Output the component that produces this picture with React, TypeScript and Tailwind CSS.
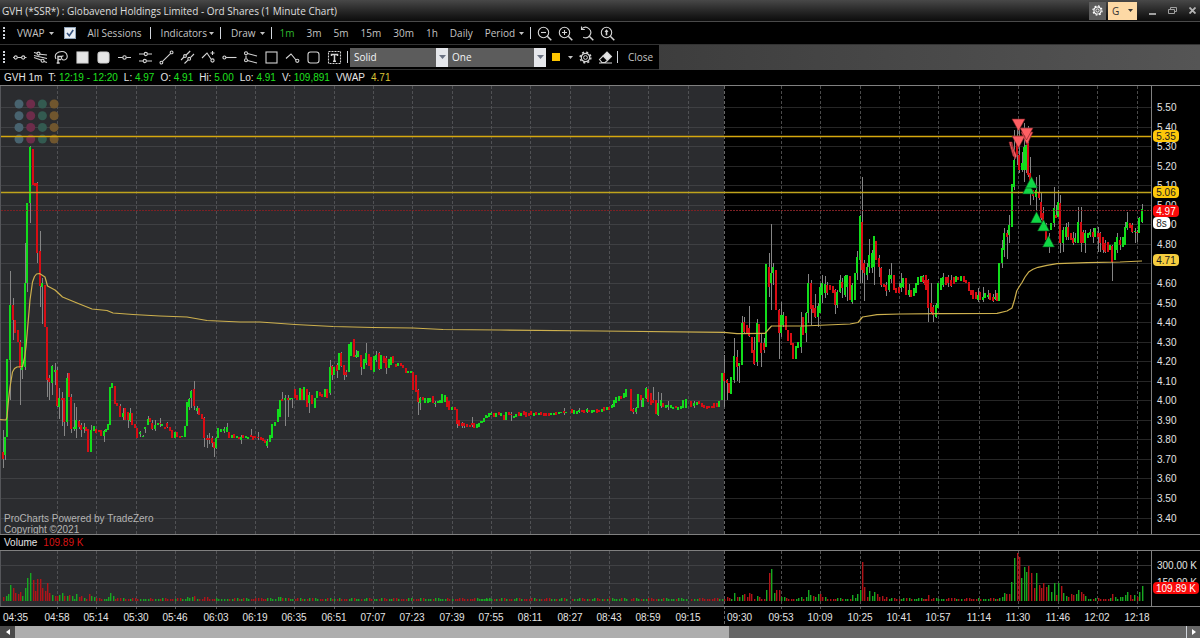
import type { ReactNode } from "react";

type Bar = {
  x: number;
  top: number;
  bottom: number;
  high: number;
  low: number;
  up: boolean;
};

// Bars are stored in thirds of a pixel from the origin of their segment:
// colour + x, body top, body bottom, and the wick when it is longer than the body.
const SEGMENTS = [
  {
    x: 0,
    y: 140,
    bars: `r10 937 957 870 983;g16 890 945 890 960;g22 658 890;g30 495 660 392 780;r38 495 540 475 600;r45 540 578;r53 570 605;r60 605 685 600 795;g67 620 690 620 718;g75 430 680 310 690;g82 190 430 190 455;g90 20 190 18 248;r98 28 135;r105 130 137;r111 130 340 127 370;r119 332 438 272 500;g127 430 440 415 553;r134 435 562;r140 562 720 560 770;r148 715 725 705 780;g155 678 728 675 765;g164 690 695 670 735;r171 690 798 680 800;g177 775 800 745 838;r185 775 780 757 857;r193 775 847 775 887;g201 715 845 700 857;r207 700 770;r214 770 868 762 878;g221 862 868 790 872;g229 840 868 800 893;r237 842 860 840 868;r244 855 870 850 892;g251 862 868 850 880;r259 862 872;r265 868 935;g273 870 937 855 937;g281 857 872;r289 868 878;r296 870 877;r303 870 887;g311 872 887 870 905;g318 867 875;g325 852 870;g331 742 855;g337 730 745;r345 738 793;r352 790 797;r360 797 830 793 832;g368 820 832 803 840;r375 803 840;r384 815 840 815 865;g391 820 842 803 845;r397 820 855;r405 853 865;r412 863 893;g420 875 882 873 890;g428 887 890 885 892;g436 862 866 860 880;g443 838 855 828 855;r450 835 845;r457 850 868 840 870;g465 855 868 840 872;g473 850 855;r480 848 853 833 860;g487 852 858;r495 860 866;r502 848 860 845 865;r510 860 872;r517 870 893;g525 877 893;r532 877 892;r540 887 893;g547 887 892;g554 857 890;g561 785 857;g567 778 800 775 810;g574 752 775 750 805;r583 748 797 722 810;g590 805 812 797 822;r597 803 825;r605 822 838;r612 835 895 832 920;r620 893 900 885 925;r628 895 900 880 913;r635 893 910 887 920;r641 907 925 905 952;g648 895 925 890 928;g655 865 895;g663 868 877;g671 868 872 862 878;g680 862 875 850 875;r687 875 895;g695 885 895;r702 882 895;g710 888 895;r717 890 897`,
  },
  {
    x: 240,
    y: 320,
    bars: `g3 350 360 345 372;r10 345 355;g17 348 355;g25 350 358;r32 345 352 328 352;r40 348 360;r46 348 355;r54 350 355 335 360;r62 352 360;r69 355 362;r76 360 370;g82 362 378 358 383;g90 345 365;g97 313 353;g105 305 318;g113 268 305;g119 240 290;r127 236 242 215 242;g136 235 240 225 318;r143 235 240 225 290;g150 233 240;g157 235 238 235 265;r165 208 235;r172 225 240;g180 205 240;r187 208 240;g193 200 240;r200 208 260;g208 225 250 215 280;r216 225 253;g224 235 265;g232 213 235;r240 215 228;r247 222 232;g255 207 232;r262 208 235;g269 140 220 120 225;r275 138 165 135 180;g283 140 165;r290 135 152 130 175;g297 98 150;r304 98 137 95 140;r312 135 165 135 180;r319 155 165 150 172;g327 72 155;g333 65 108;r342 57 110;g348 105 112 90 115;g355 92 112;r363 105 142 105 165;g371 118 148;g379 100 130 68 135;r387 103 138;r394 110 150;g401 108 155;g408 105 120 93 125;r416 98 148 95 150;g424 105 148;r431 107 130;r438 115 145 108 162;g446 118 145;g453 110 135;r460 108 130;r468 132 140;g475 130 138;r483 128 138;r490 135 145;r497 143 158;g505 152 160;g512 152 158;r520 155 210;r527 165 215;r534 210 245 208 285;g541 235 250 232 270;r549 232 240;g556 235 248;g563 235 248;g571 235 245;r578 228 250;g585 248 252 242 262;g593 243 250;g600 240 248;g607 222 248;g614 225 245;r621 230 262;r628 243 270;g636 262 270;r644 262 270;r651 268 312 268 325;r658 300 318;r666 310 318 305 325;r673 308 318 308 325;r681 312 322;r689 315 322;r696 308 315 292 322;r703 310 325;g711 312 325;g718 308 320;g725 303 308;g733 293 305;g740 287 295;g748 280 290`,
  },
  {
    x: 480,
    y: 360,
    bars: `g3 183 190;g11 175 185;g19 165 175;g26 158 170;g33 160 164 155 165;r41 160 172;g48 158 170;r56 155 165;g64 160 168;r71 165 180;g78 155 180;r86 155 165;r94 162 166 155 182;g101 168 175;g108 162 170;r116 155 168;g123 160 168;r131 153 165;r138 155 170;r146 160 168;r153 153 165;g161 160 167;r168 155 165;g176 158 165;r183 155 165;r191 160 168;r198 158 168;r206 158 168;g213 158 165;g221 158 165;r228 155 165;g236 155 163;g243 155 160;r251 153 160 143 165;g258 155 160;r275 148 158;g283 150 163;g290 152 163;g298 150 156 143 160;r305 150 157;r313 150 158;g320 148 155 143 158;r328 150 157;g335 150 158;g343 150 157;r350 148 160;r358 150 157;g365 148 155;r372 140 152;g380 140 150;r388 140 150;g395 135 143 132 145;g402 120 142;g409 112 130;g417 108 122;r424 108 116;g432 98 113;g439 88 110;r452 88 152;r460 148 155 145 162;g467 145 155 140 163;g475 103 145;r482 105 120 105 140;g490 115 140;g497 85 115 80 118;r505 88 125;r512 100 135;r520 120 130 80 130;r527 120 162;g534 130 165 95 168;g542 120 138 100 145;r550 130 140;g557 135 145;g565 135 142 122 150;g572 135 143;g580 140 148;r587 138 145;g595 140 150;g602 138 148;g610 120 145;g617 118 143;r634 122 140;g642 130 138 122 145;g650 125 135;r658 122 132;r665 128 142;r673 135 143;r680 138 146;r688 137 145;r695 138 145;r703 128 145;r710 130 142;g717 123 140`,
  },
  {
    x: 720,
    y: 170,
    bars: `g5 608 690;r13 608 632 555 710;r21 630 640 628 690;r28 640 670;g34 620 672;g41 558 630 503 640;r50 560 590 540 632;g58 580 587 580 640;g65 458 585 438 585;r73 455 485 440 490;r80 465 493;r87 475 498 408 500;r95 500 548;r102 540 583 500 585;g110 460 575 448 587;r117 462 515;r124 520 550 490 590;r131 520 540 505 550;g138 283 530;r147 290 350 248 380;g152 310 340 162 420;g160 290 308 278 345;r168 300 420;r176 420 488 418 568;g184 435 490 395 500;g190 435 465 425 470;r197 437 480;r205 480 513;r213 490 525;r220 520 567;g228 528 568;g235 515 535;g242 470 530 425 548;r250 440 495;g257 430 490 425 515;g265 340 430 313 460;r272 338 418 330 465;r280 405 430;r286 415 442 373 445;g293 408 440 400 472;g301 352 428 340 430;g307 340 375 315 400;g314 342 370 318 385;r322 345 370 335 375;r330 345 360;r338 347 370;r345 360 405 358 432;g352 365 405 360 415;g360 330 365 315 370;r367 335 355 325 385;g375 318 375 315 380;g382 315 350 315 392;r390 318 390;g397 345 395 338 402;g404 310 390;g412 260 310 243 330;g419 138 270 135 340;r425 155 300 20 340;r433 280 310 270 392;g440 290 315 280 330;g447 255 290 208 310;g455 250 295 240 310;g462 198 290 198 345;r469 212 270;r477 265 290 255 320;r484 293 345 290 350;r492 342 350;r499 345 362 335 378;g506 315 360 298 365;g514 315 328 280 340;r521 315 360;r529 355 368;r537 352 368 340 370;g543 340 355 310 365;g550 325 350 325 355;r558 325 375;g566 360 375 343 380;r574 360 380;g581 355 378;g588 340 370;g595 320 345;g603 317 335;g610 317 330;r616 330 345`,
  },
  {
    x: 920,
    y: 90,
    bars: `r10 560 575 555 580;r17 555 600;r24 570 655 568 697;r32 640 665 580 670;r40 650 675 645 697;g47 645 680 640 685;g55 580 655;g62 565 600;g70 560 585 550 590;r78 562 585;r85 560 580 555 590;r93 570 588 555 590;r101 562 582;g108 558 575;r115 560 570;g124 558 572;r131 558 575;r138 570 580;r146 575 602;r153 600 615;r160 600 628;r167 605 628;g174 615 630 595 635;r181 605 630;g189 620 630 592 635;g196 610 625;g204 615 620 600 628;r211 608 630;r218 622 632 612 635;g226 620 628 600 630;r232 608 632;g238 518 632;g245 475 520 450 535;g252 428 480 415 500;r260 430 440 420 508;g267 405 435 375 460;g275 283 412;g283 210 290 120 300;r290 150 195 110 225;r297 195 240 100 250;g305 220 240 185 245;g313 170 240 100 275;g319 165 240 165 250;r325 160 255 108 260;r331 250 290 200 345;r338 300 318 300 330;g348 300 320 260 360;r357 305 325 255 330;r362 335 385 305 390;r370 370 415 350 420;r378 415 450 400 460;g386 440 450 430 490;g394 400 420;g401 355 400 290 410;r408 375 385 345 385;g415 335 380 300 380;r421 340 460 315 488;g429 420 460 410 485;g437 410 440 400 450;r444 410 440 395 450;r452 430 450;r459 445 460 425 465;g466 445 455 430 460;g474 395 460 350 460;r482 395 460 350 485;r489 425 460 420 460;g496 430 460 420 490;g503 430 445;g510 425 435 418 440;r518 425 440 415 460;g525 415 440;r533 430 440 410 485;r541 430 460 425 485;r548 440 480 440 490;r556 460 485 450 490;r563 455 485;g570 465 480;r577 468 515 465 572;g585 455 510;g592 440 480 430 490;r600 450 465 440 480;g608 440 470;g615 410 465 395 465;g622 395 415 367 420;r629 400 415;r636 405 425 398 430;g644 422 426 415 460;r651 425 430 420 455;g658 385 430 380 430;g665 358 395 343 400`,
  },
];

const BARS: Bar[] = SEGMENTS.flatMap((segment) =>
  segment.bars.split(";").map((item) => {
    const [x, top, bottom, high = top, low = bottom] = item
      .slice(1)
      .split(" ")
      .map(Number);
    const toY = (v: number) => Math.round(segment.y + v / 3);
    return {
      x: Math.round(segment.x + x / 3),
      top: toY(top),
      bottom: toY(bottom),
      high: toY(high),
      low: toY(low),
      up: item[0] === "g",
    };
  })
);

// colour + x, height
const VOLUME_SPIKES =
  "r3 4;g6 5;g8 7;g10 16;r13 13;r15 8;r18 7;r20 9;g22 5;g25 13;g27 23;g30 28;r33 21;r35 10;r37 22;r40 22;r42 13;r45 10;r47 18;r49 8;g52 6;r55 5;r57 5;g59 6;g62 8;r64 5;g67 5;r69 6;g72 5;g76 7;r79 4;r81 5;r89 7;g91 5;g94 4;g108 4;g110 8;g113 5;g187 4;g192 4;r194 5;r204 4;r207 4;g278 4;g280 4;r727 4;g734 8;r737 4;g739 4;g742 6;r744 7;r747 4;r749 8;r751 7;g757 5;r759 4;g766 11;r769 28;g771 32;g774 8;r776 11;r779 11;g781 4;g784 4;g801 4;g806 4;g808 11;g810 6;r813 5;g815 4;g818 7;r820 7;r822 4;g825 4;g852 6;g857 7;g860 11;r862 39;r864 14;r867 4;g869 10;g872 5;g874 9;r877 7;r879 4;r882 5;r886 4;r928 6;g999 3;g1002 4;g1004 8;r1006 7;r1009 7;g1011 19;g1014 43;r1017 48;r1019 44;g1021 23;g1024 34;g1026 29;r1028 35;r1031 28;r1034 13;g1036 28;r1039 16;r1041 13;r1043 18;r1046 14;g1048 16;g1051 9;g1054 18;r1056 6;g1058 18;r1061 15;g1063 8;g1066 5;r1068 4;r1071 7;r1073 6;g1076 7;g1078 11;r1081 9;r1083 7;g1085 5;r1112 7;g1115 4;g1120 4;g1122 4;g1125 6;g1127 9;r1130 6;g1134 6;r1137 4;g1139 9;g1142 15"
    .split(";")
    .map((item) => {
      const [x, height] = item.slice(1).split(" ").map(Number);
      return { x, height, up: item[0] === "g" };
    });

const VOLUME = [
  ...VOLUME_SPIKES,
  ...BARS.filter((b) => !VOLUME_SPIKES.some((s) => Math.abs(s.x - b.x) < 2)).map(
    (b) => ({ x: b.x, height: b.x % 3 === 0 ? 3 : 2, up: b.up })
  ),
];

const TIMES = [
  [57, "04:58"], [96, "05:14"], [136, "05:30"], [175, "05:46"], [216, "06:03"],
  [255, "06:19"], [294, "06:35"], [334, "06:51"], [373, "07:07"], [412, "07:23"],
  [452, "07:39"], [491, "07:55"], [530, "08:11"], [570, "08:27"], [609, "08:43"],
  [648, "08:59"], [688, "09:15"], [781, "09:53"], [820, "10:09"], [860, "10:25"],
  [899, "10:41"], [938, "10:57"], [979, "11:14"], [1018, "11:30"], [1058, "11:46"],
  [1097, "12:02"], [1137, "12:18"],
] as const;

const PRICES = Array.from({ length: 22 }, (_, i) => ({
  y: Math.round(107 + i * 19.55),
  label: (5.5 - i * 0.1).toFixed(2),
}));

const VWAP =
  "M0 419.7L6 420L7 417L8.500 400L10 387L12.5 372L14.500 368.500L17 367L22.5 366.5L24.500 358L26 347L30 300L32.5 282L34.500 276.500L36.5 274L39.5 273.5L45 277L47.5 286L55 290L62.5 297L77 303L92 309L107 310.5L113 313L133 314.5L160 316L187 317L207 320.5L240 322L260 322L295 324.5L333 326.5L373 327.5L413 328L443 329.5L500 330L600 331L724 332.3L737 333.7L765 333.3L771.5 326L803 326L850 324L858 322.5L862.5 317L877 314.7L900 314L940 313.7L997 313.3L1007 311L1012 308L1014.5 300L1016.700 291L1019 287L1022 282.500L1025 277L1029 271.7L1033 269.300L1038 267.3L1047 265.300L1057 263.7L1087 262.7L1120 262L1142 261";

const SELLS = [[1018, 119], [1026, 128], [1018, 136]];
const BUYS = [[1028, 183], [1031, 177], [1036, 212], [1043, 220], [1048, 236]];
const DOTS = ["#48636f", "#6d2c4a", "#335a50", "#70562e"];

const Grip = () => (
  <span className="h-3 border-l-2 border-dotted border-gray-300" />
);

const Divider = () => <span className="h-3 w-px shrink-0 bg-gray-300" />;

const Caret = () => (
  <svg width="5" height="3" viewBox="0 0 5 3" fill="currentColor">
    <path d="M0 0h5L2.5 3z" />
  </svg>
);

const Icon = ({ children }: { children: ReactNode }) => (
  <svg
    width="15"
    height="15"
    viewBox="0 0 15 15"
    fill="none"
    stroke="#d4d4d4"
    strokeWidth="1.1"
  >
    {children}
  </svg>
);

const Magnifier = ({ children }: { children?: ReactNode }) => (
  <Icon>
    <circle cx="6.5" cy="6.5" r="5.2" />
    <path d="M10.3 10.3l4 4" strokeWidth="1.5" />
    {children}
  </Icon>
);

const Gear = ({ color, size }: { color: string; size: number }) => (
  <svg width={size} height={size} viewBox="0 0 13 13" fill="none" stroke={color}>
    <circle cx="6.5" cy="6.5" r="4.2" strokeWidth="1.2" />
    <circle cx="6.5" cy="6.5" r="5.4" strokeWidth="1.4" strokeDasharray="2.1 2.14" />
    <circle cx="6.5" cy="6.5" r="1.9" />
  </svg>
);

const TOOLS: { name: string; icon: ReactNode }[] = [
  {
    name: "Line",
    icon: (
      <>
        <path d="M1 7.5h1M5.5 7.5h4M13 7.5h1.5" />
        <circle cx="3.7" cy="7.5" r="1.6" />
        <circle cx="11.2" cy="7.5" r="1.6" />
      </>
    ),
  },
  {
    name: "Channel",
    icon: (
      <>
        <path d="M1 2.500l3 .7M7 4.200l7 .8M1 7.500l7 2.500M11 11.500l3 1M1 5.500l13 3" />
        <circle cx="5.5" cy="3.6" r="1.5" />
        <circle cx="9.6" cy="10.8" r="1.5" />
      </>
    ),
  },
  {
    name: "Fibonacci",
    icon: (
      <>
        <path d="M2 9C-.5 4 4 1.500 8 1.500c6 0 7 8 2 8.500-3 .3-3.500-4-.5-4.300" />
        <path d="M4 13V6.500h4M4 9.500h3M2.700 13h3" strokeWidth="1.4" />
      </>
    ),
  },
  { name: "Filled rectangle", icon: <rect x="2" y="2" width="11" height="11" fill="#e5e5e5" /> },
  { name: "Filled ellipse", icon: <rect x="2" y="2" width="11" height="11" rx="2.5" fill="#e5e5e5" /> },
  {
    name: "Horizontal line",
    icon: (
      <>
        <path d="M1 7.500h4.700M9.300 7.500H14" />
        <circle cx="7.5" cy="7.5" r="1.7" />
      </>
    ),
  },
  {
    name: "Parallel lines",
    icon: (
      <>
        <path d="M1 4h5M9.500 4H14M1 11h4M8.500 11H14" />
        <circle cx="7.8" cy="4" r="1.6" />
        <circle cx="6.8" cy="11" r="1.6" />
      </>
    ),
  },
  {
    name: "Trend line",
    icon: (
      <>
        <path d="M3.300 11.700l8.400-8.400" />
        <circle cx="2.4" cy="12.6" r="1.4" />
        <circle cx="12.6" cy="2.400" r="1.4" />
      </>
    ),
  },
  {
    name: "Trend channel",
    icon: (
      <>
        <path d="M1 10l3-3M6.200 5l4-4M4.500 13.500l3.700-3.700M10.400 7.600L14 4" />
        <circle cx="5" cy="6" r="1.4" />
        <circle cx="9.2" cy="8.800" r="1.4" />
      </>
    ),
  },
  {
    name: "Wave",
    icon: (
      <>
        <path d="M1 8l5-5 4 6M11.500 1v4M9.500 3h4" />
        <circle cx="11.5" cy="10.500" r="1.6" />
      </>
    ),
  },
  {
    name: "Ray",
    icon: (
      <>
        <path d="M4 7.500h10.500" />
        <circle cx="2.4" cy="7.5" r="1.5" />
      </>
    ),
  },
  {
    name: "Rays",
    icon: (
      <>
        <path d="M4.500 3.500L14 6M4.500 10.500L14 13M3 5.500v3" />
        <circle cx="3" cy="3.300" r="1.5" />
        <circle cx="3" cy="10.200" r="1.5" />
      </>
    ),
  },
  { name: "Rectangle", icon: <rect x="2" y="2" width="11" height="11" /> },
  {
    name: "Polyline",
    icon: (
      <>
        <path d="M1 8.500l5-4.500 5 6" />
        <circle cx="12.300" cy="10.800" r="1.6" />
      </>
    ),
  },
  { name: "Rounded rectangle", icon: <rect x="2" y="2" width="11" height="11" rx="2.5" /> },
  {
    name: "Text",
    icon: (
      <>
        <rect x="1.500" y="1.500" width="12" height="12" strokeDasharray="2 1" />
        <path d="M4.500 6V4.500h6V6M7.500 4.500v7M6 11.200h3" strokeWidth="1.5" />
      </>
    ),
  },
];

const Quote = ({ label, value }: { label: string; value: string }) => (
  <span>
    {label} <span className="text-[#1fe01f]">{value}</span>
  </span>
);

const Badge = ({
  y,
  label,
  width = 26,
  fill,
  color = "#1a1a1a",
}: {
  y: number;
  label: string;
  width?: number;
  fill: string;
  color?: string;
}) => (
  <g>
    <rect x="1153" y={y - 6} width={width} height="12" rx="4" fill={fill} />
    <text x={1153 + width / 2} y={y + 4} textAnchor="middle" fill={color}>
      {label}
    </text>
  </g>
);

const Combo = ({ label, value }: { label: string; value: string }) => (
  <div className="relative h-[19px] w-[98px] bg-[#5c5c5c]">
    <select
      aria-label={label}
      className="h-full w-full appearance-none bg-transparent pl-1 text-gray-100"
    >
      <option>{value}</option>
    </select>
    <span className="pointer-events-none absolute inset-y-0 right-0 flex w-3 items-center justify-center bg-gray-200 text-gray-500">
      <svg width="7" height="4" viewBox="0 0 7 4" fill="currentColor">
        <path d="M0 0h7L3.500 4z" />
      </svg>
    </span>
  </div>
);

const PriceChart = () => (
  <svg
    viewBox="0 86 1200 448"
    className="block h-auto w-full"
    fontSize="10"
    role="img"
    aria-label="Price"
  >
    <rect x="0" y="86" width="724" height="448" fill="#2b2c2f" />
    <g shapeRendering="crispEdges" fill="none">
      {PRICES.map((p) => (
        <g key={p.label}>
          <path d={`M0 ${p.y + 0.5}H724`} stroke="#3f4043" />
          <path d={`M724 ${p.y + 0.5}H1151`} stroke="#262626" />
        </g>
      ))}
      {TIMES.map(([x]) => (
        <path
          key={x}
          d={`M${x + 0.5} 86V534`}
          stroke={x < 724 ? "#505154" : "#4a4a4a"}
          strokeDasharray="3 2"
        />
      ))}
      <path d="M724.500 86V534" stroke="#666" strokeDasharray="3 2" />
      <path d="M0.500 86V534" stroke="#55565a" />
    </g>
    {DOTS.map((color, col) =>
      [0, 1, 2, 3].map((row) => (
        <circle
          key={`${color}${row}`}
          cx={19 + col * 11.7}
          cy={104 + row * 11.7}
          r="4.500"
          fill={color}
        />
      ))
    )}
    <g shapeRendering="crispEdges">
      {BARS.map((b, i) => (
        <rect key={i} x={b.x} y={b.high} width="1" height={b.low - b.high} fill="#858585" />
      ))}
      {BARS.map((b, i) => (
        <rect
          key={i}
          x={b.x - 1}
          y={b.top}
          width="2"
          height={Math.max(b.bottom - b.top, 1)}
          fill={b.up ? "#12dc1c" : "#d80d14"}
        />
      ))}
    </g>
    <g fill="none">
      <path d="M1 136.500H1151" stroke="#d6a80f" strokeWidth="1.3" />
      <path d="M1 192.500H1151" stroke="#bfa31c" strokeWidth="1.3" />
      <path d="M1 210.500H1151" stroke="#7d2024" strokeDasharray="2 1" />
      <path d={VWAP} stroke="#cdb04e" strokeWidth="1.2" strokeLinejoin="round" />
    </g>
    <g stroke="#7c1f26" strokeWidth="0.600" fill="#ff5f63">
      <path d="M1009 142l3 0 4 17-3-3z" />
      <path d="M1011 143l6 13-2 3z" />
      <path d="M1021 132h12l-6 13z" />
      {SELLS.map(([x, y]) => (
        <path key={y} d={`M${x - 6} ${y}h13l-6.500 12z`} />
      ))}
    </g>
    <g stroke="#063d14" strokeWidth="0.600" fill="#10d745">
      {BUYS.map(([x, y]) => (
        <path key={y} d={`M${x - 5.5} ${y + 11}h12l-6-11.500z`} />
      ))}
    </g>
    <g fill="#b4b4b4">
      <text x="4" y="522">ProCharts Powered by TradeZero</text>
      <text x="4" y="533">Copyright ©2021</text>
    </g>
    <path d="M1151.500 86V534" stroke="#808080" />
    <g fill="#e4e4e4">
      {/* the VWAP badge takes the place of the 4.70 tick */}
      {PRICES.filter((p) => p.label !== "4.70").map((p) => (
        <text key={p.label} x="1157" y={p.y + 4}>
          {p.label}
        </text>
      ))}
    </g>
    <Badge y={136} label="5.35" fill="#fdc80a" />
    <Badge y={192} label="5.06" fill="#fdc80a" />
    <Badge y={211} label="4.97" fill="#fa0a0a" color="#fff" />
    <Badge y={223} label="8s" width={17} fill="#fff" />
    <Badge y={260} label="4.71" fill="#f5cd3f" />
  </svg>
);

const VolumeChart = () => (
  <svg
    viewBox="0 551 1200 75"
    className="block h-auto w-full"
    fontSize="10"
    role="img"
    aria-label="Volume"
  >
    <rect x="0" y="551" width="724" height="55" fill="#2b2c2f" />
    <g shapeRendering="crispEdges" fill="none">
      {[565, 583].map((y) => (
        <g key={y}>
          <path d={`M0 ${y + 0.5}H724`} stroke="#404144" />
          <path d={`M724 ${y + 0.5}H1151`} stroke="#333" />
        </g>
      ))}
      {TIMES.map(([x]) => (
        <path
          key={x}
          d={`M${x + 0.5} 551V609`}
          stroke={x < 724 ? "#505154" : "#4f4f4f"}
          strokeDasharray="3 2"
        />
      ))}
      <path d="M724.500 551V626" stroke="#666" strokeDasharray="3 2" />
      <path d="M0.500 551V606" stroke="#55565a" />
      <path d="M1151.500 551V606" stroke="#808080" />
      <path d="M0 606.500H1200" stroke="#808080" />
    </g>
    <g>
      {VOLUME.map((v) => (
        <rect
          key={v.x}
          x={v.x}
          y={601 - v.height}
          width="1.4"
          height={v.height}
          fill={v.up ? "#17a821" : "#b01318"}
        />
      ))}
    </g>
    <g fill="#e4e4e4">
      <text x="1157" y="569">300.00 K</text>
      <text x="1157" y="586">150.00 K</text>
      <text x="3" y="621">04:35</text>
      <text x="727" y="621">09:30</text>
      {TIMES.map(([x, label]) => (
        <text key={label} x={x} y="621" textAnchor="middle">
          {label}
        </text>
      ))}
    </g>
    <Badge y={588} label="109.89 K" width={46} fill="#fa0a0a" color="#fff" />
  </svg>
);

const ScrollBar = () => (
  <div className="flex h-3 bg-[#666]">
    <button
      aria-label="Scroll left"
      className="flex w-[15px] items-center justify-center bg-[#4a4a4a] text-white"
    >
      <svg width="4" height="6" viewBox="0 0 4 6" fill="currentColor">
        <path d="M4 0v6L0 3z" />
      </svg>
    </button>
    <div className="flex-1">
      <div className="h-full w-[61%] bg-[#adadad]" />
    </div>
    <button
      aria-label="Scroll right"
      className="flex w-[14px] items-center justify-center border-l border-gray-300 text-white"
    >
      <svg width="4" height="6" viewBox="0 0 4 6" fill="currentColor">
        <path d="M0 0v6l4-3z" />
      </svg>
    </button>
  </div>
);

export default function App() {
  return (
    <div className="bg-black font-['Open_Sans',sans-serif] text-[10px] leading-none text-[#c4c4c4]">
      <header className="flex h-[22px] items-center border-b border-[#4a4a4a] bg-linear-to-b from-[#484848] to-[#0c0c0c] pr-1 pl-0.5">
        <h1 className="flex-1 text-[#dedede]">
          GVH (*SSR*) : Globavend Holdings Limited - Ord Shares (1 Minute Chart)
        </h1>
        <div className="flex items-center">
          <button
            aria-label="Settings"
            className="mr-0.5 flex h-[18px] w-[17px] items-center justify-center bg-[#5c5c5c]"
          >
            <Gear color="#ffffff" size={11} />
          </button>
          <button className="flex h-[18px] w-[29px] items-center justify-between bg-[#fdd9a5] px-1 text-[#333]">
            G <Caret />
          </button>
          <button aria-label="Minimize" className="ml-3 flex h-4 w-[7px] items-end pb-1">
            <span className="h-0.5 w-full bg-[#a0a0a0]" />
          </button>
          <button aria-label="Restore" className="ml-3">
            <svg width="9" height="7" viewBox="0 0 9 7" fill="none" stroke="#a0a0a0">
              <path d="M.500 2.500h6v4h-6zM2.500 2V.500h6v4H7" />
            </svg>
          </button>
          <button aria-label="Close window" className="ml-3">
            <svg width="7" height="7" viewBox="0 0 7 7" stroke="#b5b5b5" strokeWidth="1.8">
              <path d="M.500.500l6 6M6.500.500l-6 6" />
            </svg>
          </button>
        </div>
      </header>

      <nav className="flex h-[23px] items-center border-b border-[#333] pl-[3px]">
        <Grip />
        <button className="ml-3 flex items-center gap-1">
          VWAP <Caret />
        </button>
        <label className="ml-2.5 flex items-center gap-3">
          <span className="relative size-3">
            <input
              type="checkbox"
              defaultChecked
              className="block size-3 appearance-none border border-[#8fa3b8] bg-[#e9eef4]"
            />
            <svg
              className="pointer-events-none absolute inset-0"
              width="12"
              height="12"
              viewBox="0 0 12 12"
              fill="none"
              stroke="#35527e"
              strokeWidth="1.6"
            >
              <path d="M3 6l2.300 2.700L9.200 3" />
            </svg>
          </span>
          All Sessions
        </label>
        <div className="ml-2 flex items-center gap-2.5">
          <Divider />
          <button className="flex items-center gap-0.5">
            Indicators <Caret />
          </button>
        </div>
        <div className="ml-1.5 flex items-center gap-2.5">
          <Divider />
          <button className="flex items-center gap-1">
            Draw <Caret />
          </button>
        </div>
        <div className="ml-1.5 flex items-center gap-2">
          <Divider />
          <div className="flex items-center gap-3">
            <button className="text-[#2fb92f]">1m</button>
            <button>3m</button>
            <button>5m</button>
            <button>15m</button>
            <button>30m</button>
            <button>1h</button>
            <button>Daily</button>
            <button className="flex items-center gap-1">
              Period <Caret />
            </button>
          </div>
        </div>
        <div className="ml-1.5 flex items-center gap-1.5">
          <Divider />
          <button aria-label="Zoom out">
            <Magnifier>
              <path d="M4 6.500h5" />
            </Magnifier>
          </button>
          <button aria-label="Zoom in">
            <Magnifier>
              <path d="M4 6.500h5M6.500 4v5" />
            </Magnifier>
          </button>
          <button aria-label="Undo zoom">
            <Icon>
              <path d="M3 2.700a5.200 5.200 0 1 1 1.200 8.500M2.500.500v3h3.300" />
              <path d="M10.300 10.300l4 4" strokeWidth="1.5" />
            </Icon>
          </button>
          <button aria-label="Reset zoom">
            <Magnifier>
              <path d="M6.500 9.300V4.500" strokeWidth="1.6" />
              <path d="M4.500 6l2-2.700 2 2.700z" fill="#d4d4d4" stroke="none" />
            </Magnifier>
          </button>
        </div>
      </nav>

      <div className="flex h-[25px] bg-linear-to-r from-[#222] to-[#555]">
        <div className="flex items-center border-b border-[#333] bg-black pr-1.5 pl-[3px]">
          <Grip />
          <div className="ml-1 flex">
            {TOOLS.map((tool) => (
              <button
                key={tool.name}
                aria-label={tool.name}
                className="flex w-[21px] justify-center"
              >
                <Icon>{tool.icon}</Icon>
              </button>
            ))}
          </div>
          <div className="ml-0.5 flex items-center gap-0.5">
            <Divider />
            <div className="flex">
              <Combo label="Line style" value="Solid" />
              <Combo label="Line width" value="One" />
            </div>
          </div>
          <button aria-label="Line colour" className="ml-1.5 flex items-center gap-2">
            <span className="size-2 bg-[#fdc500]" />
            <Caret />
          </button>
          <button aria-label="Options" className="ml-1.5">
            <Gear color="#d4d4d4" size={13} />
          </button>
          <button aria-label="Erase" className="ml-1.5">
            <Icon>
              <path d="M5 6l4-4 4.500 4.500-4 4z" fill="#e5e5e5" />
              <path d="M5 6l-3.500 3.500 2.500 3H7l2.500-2M1 13h13" />
            </Icon>
          </button>
          <div className="ml-1 flex items-center gap-2.5">
            <Divider />
            <button>Close</button>
          </div>
        </div>
      </div>

      <div className="font-['Liberation_Sans',Arial,sans-serif] text-[10px]">
        <div className="flex h-4 items-center gap-1.5 border-b border-[#808080] pl-1 text-[#e4e4e4]">
          <span>GVH 1m</span>
          <Quote label="T:" value="12:19 - 12:20" />
          <Quote label="L:" value="4.97" />
          <Quote label="O:" value="4.91" />
          <Quote label="Hi:" value="5.00" />
          <Quote label="Lo:" value="4.91" />
          <Quote label="V:" value="109,891" />
          <span>VWAP</span>
          <span className="text-[#d9c236]">4.71</span>
        </div>
        <PriceChart />
        <div className="flex h-[17px] items-center gap-1.5 border-y border-[#808080] pl-1 text-[#e4e4e4]">
          <span>Volume</span>
          <span className="text-[#d81414]">109.89 K</span>
        </div>
        <VolumeChart />
        <ScrollBar />
      </div>
    </div>
  );
}
